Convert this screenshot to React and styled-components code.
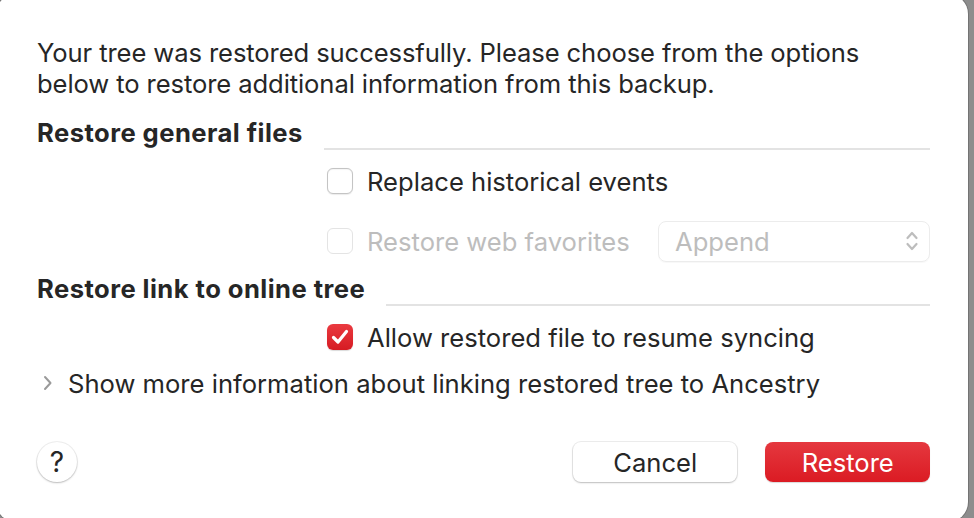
import React from "react";
import styled, { createGlobalStyle } from "styled-components";

const Global = createGlobalStyle`
  html, body {
    margin: 0;
    padding: 0;
    background: #8d8d8d;
    overflow: hidden;
  }
  body {
    font-family: Inter, "Noto Sans", "Liberation Sans", sans-serif;
    color: #262626;
  }
`;

const Sheet = styled.div`
  box-sizing: border-box;
  width: 972px;
  height: 528px;
  margin: -6px 0 0 -4px;
  background: #fff;
  border-radius: 20px;
  box-shadow: 0 0 0 1px rgba(0, 0, 0, 0.18);
  padding: 43px 38px 0 41px;
  display: flex;
  flex-direction: column;
`;

const Intro = styled.p`
  margin: 0;
  font-size: 25.6px;
  line-height: 31px;
  letter-spacing: -0.1px;
`;

const SectionHead = styled.div`
  display: flex;
  align-items: flex-end;
  gap: 21px;
  margin-top: ${(p) => p.$top}px;
`;

const HeadTitle = styled.h2`
  margin: 0;
  font-size: 25.6px;
  font-weight: 700;
  line-height: 31px;
  white-space: nowrap;
  letter-spacing: 0.45px;
`;

const Rule = styled.div`
  flex: 1;
  height: 2px;
  background: #e3e3e3;
  margin-bottom: -2px;
`;

const OptionRow = styled.div`
  display: flex;
  align-items: center;
  padding-left: 290px;
  height: 48px;
  margin-top: ${(p) => p.$top || 0}px;
`;

const Box = styled.span`
  box-sizing: border-box;
  width: 26px;
  height: 26px;
  border-radius: 6px;
  flex-shrink: 0;
  display: flex;
  align-items: center;
  justify-content: center;
  background: ${(p) =>
    p.$checked ? "linear-gradient(#ea3a40, #d61b23)" : "#fff"};
  border: ${(p) =>
    p.$checked ? "none" : p.$disabled ? "1px solid #e4e4e4" : "1px solid #c4c4c4"};
  box-shadow: ${(p) =>
    p.$checked
      ? "0 1px 1px rgba(0,0,0,0.15)"
      : p.$disabled
      ? "none"
      : "inset 0 1px 1px rgba(0,0,0,0.04), 0 0.5px 1px rgba(0,0,0,0.08)"};
`;

const Label = styled.span`
  margin-left: 14px;
  font-size: 25.6px;
  line-height: 31px;
  color: ${(p) => (p.$disabled ? "#bdbdbd" : "#262626")};
  white-space: nowrap;
`;

const Popup = styled.div`
  box-sizing: border-box;
  margin-left: auto;
  width: 272px;
  height: 41px;
  border-radius: 8px;
  border: 1px solid #ececec;
  box-shadow: 0 1px 1px rgba(0, 0, 0, 0.03);
  display: flex;
  align-items: center;
  justify-content: space-between;
  padding: 0 10px 0 16px;
  font-size: 25.6px;
  color: #bdbdbd;
`;

const Disclosure = styled.div`
  display: flex;
  align-items: center;
  gap: 15px;
  margin-top: -1px;
  padding-left: 5px;
  height: 46px;
  font-size: 25.6px;
  white-space: nowrap;
`;

const Footer = styled.div`
  display: flex;
  align-items: center;
  margin-top: 36px;
`;

const Help = styled.button`
  width: 40px;
  height: 40px;
  border-radius: 50%;
  border: none;
  background: #fff;
  box-shadow: 0 0 0 1px rgba(0, 0, 0, 0.06), 0 1px 2px rgba(0, 0, 0, 0.22);
  font-family: inherit;
  font-size: 28px;
  font-weight: 400;
  color: #262626;
  padding: 0;
  display: flex;
  align-items: center;
  justify-content: center;
`;

const Button = styled.button`
  box-sizing: border-box;
  width: 165px;
  height: 40px;
  border-radius: 8px;
  border: none;
  font-family: inherit;
  font-size: 25.6px;
  margin-left: ${(p) => p.$ml || 0}px;
  color: ${(p) => (p.$primary ? "#fff" : "#262626")};
  background: ${(p) =>
    p.$primary ? "linear-gradient(#e5383f, #db1b23)" : "#fff"};
  box-shadow: ${(p) =>
    p.$primary
      ? "0 1px 1px rgba(0,0,0,0.15)"
      : "0 0 0 1px rgba(0,0,0,0.07), 0 1px 2px rgba(0,0,0,0.2)"};
`;

const Check = () => (
  <svg width="18" height="16" viewBox="0 0 18 16">
    <path
      d="M2.5 8.5 L7 13 L15.5 2.5"
      fill="none"
      stroke="#fff"
      strokeWidth="3.2"
      strokeLinecap="round"
      strokeLinejoin="round"
    />
  </svg>
);

const UpDown = () => (
  <svg width="14" height="22" viewBox="0 0 14 22">
    <path
      d="M2.5 8 L7 3 L11.5 8 M2.5 14 L7 19 L11.5 14"
      fill="none"
      stroke="#bdbdbd"
      strokeWidth="2.2"
      strokeLinecap="round"
      strokeLinejoin="round"
    />
  </svg>
);

const Chevron = () => (
  <svg width="11" height="18" viewBox="0 0 11 18">
    <path
      d="M3 3 L8.5 9 L3 15"
      fill="none"
      stroke="#9a9a9a"
      strokeWidth="2"
      strokeLinecap="round"
      strokeLinejoin="round"
    />
  </svg>
);

export default function App() {
  return (
    <>
      <Global />
      <Sheet>
        <Intro>
          Your tree was restored successfully. Please choose from the options
          <br />
          below to restore additional information from this backup.
        </Intro>

        <SectionHead $top={18}>
          <HeadTitle>Restore general files</HeadTitle>
          <Rule />
        </SectionHead>
        <OptionRow $top={9}>
          <Box />
          <Label>Replace historical events</Label>
        </OptionRow>
        <OptionRow $top={12}>
          <Box $disabled />
          <Label $disabled>Restore web favorites</Label>
          <Popup>
            <span>Append</span>
            <UpDown />
          </Popup>
        </OptionRow>

        <SectionHead $top={8}>
          <HeadTitle>Restore link to online tree</HeadTitle>
          <Rule />
        </SectionHead>
        <OptionRow $top={9}>
          <Box $checked>
            <Check />
          </Box>
          <Label>Allow restored file to resume syncing</Label>
        </OptionRow>

        <Disclosure>
          <Chevron />
          <span>Show more information about linking restored tree to Ancestry</span>
        </Disclosure>

        <Footer>
          <Help>?</Help>
          <Button $ml={496}>Cancel</Button>
          <Button $primary $ml={28}>
            Restore
          </Button>
        </Footer>
      </Sheet>
    </>
  );
}
